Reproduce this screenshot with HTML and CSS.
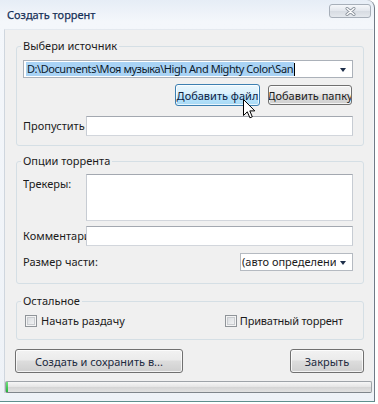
FILE: index.html
```html
<!DOCTYPE html>
<html lang="ru">
<head>
    <meta charset="UTF-8">
    <title>Создать торрент</title>
    <link rel="stylesheet" href="styles.css">
</head>
<body>
    <div class="window">
        <div class="titlebar">
            <span class="title">Создать торрент</span>
            <span class="close">
                <svg width="11" height="9" viewBox="0 0 11 9">
                    <path d="M2 1.5 L9 7.5 M9 1.5 L2 7.5" stroke="#8a929c" stroke-width="3" stroke-linecap="round"/>
                    <path d="M2 1.5 L9 7.5 M9 1.5 L2 7.5" stroke="#fff" stroke-width="1.4" stroke-linecap="round"/>
                </svg>
            </span>
        </div>

        <div class="client">
            <div class="client-body">
                <fieldset class="group group-source">
                    <legend>Выбери источник</legend>
                    <div class="combo combo-path">
                        <span class="combo-text"><span class="sel">D:\Documents\Моя музыка\High And Mighty Color\San</span><span class="caret"></span></span>
                        <span class="arrow"></span>
                    </div>
                    <div class="add-row">
                        <button class="btn btn-hover btn-file"><span>Добавить файл</span></button>
                        <button class="btn btn-folder"><span>Добавить папку</span></button>
                    </div>
                    <div class="field-row skip-row">
                        <span class="lbl">Пропустить</span>
                        <div class="edit"></div>
                    </div>
                </fieldset>

                <fieldset class="group group-options">
                    <legend>Опции торрента</legend>
                    <div class="field-row trackers-row">
                        <span class="lbl">Трекеры:</span>
                        <div class="edit memo"></div>
                    </div>
                    <div class="field-row comment-row">
                        <span class="lbl">Комментарий</span>
                        <div class="edit"></div>
                    </div>
                    <div class="field-row size-row">
                        <span class="lbl lbl-wide">Размер части:</span>
                        <div class="combo combo-size">
                            <span class="combo-text">(авто определение)</span>
                            <span class="arrow"></span>
                        </div>
                    </div>
                </fieldset>

                <fieldset class="group group-other">
                    <legend>Остальное</legend>
                    <div class="check-row">
                        <label class="check"><span class="box"></span>Начать раздачу</label>
                        <label class="check check-private"><span class="box"></span>Приватный торрент</label>
                    </div>
                </fieldset>

                <div class="action-row">
                    <button class="btn btn-create"><span>Создать и сохранить в...</span></button>
                    <button class="btn btn-close"><span>Закрыть</span></button>
                </div>
            </div>

            <div class="progress"><div class="progress-fill" style="width: 2px"></div></div>
        </div>

        <svg class="cursor" width="13" height="20" viewBox="0 0 13 20">
            <path d="M0.5 0.5 L0.5 16.5 L4.3 12.8 L6.9 18.8 L9.3 17.8 L6.8 11.9 L11.8 11.9 Z" fill="#fff" stroke="#000" stroke-width="1" stroke-linejoin="miter"/>
        </svg>
    </div>
</body>
</html>
```

FILE: styles.css
```css
* {
    box-sizing: border-box;
}
body {
    margin: 0;
    background: #fff;
    font-family: "Noto Sans", "DejaVu Sans", sans-serif;
    font-size: 11px;
    color: #1b1b1b;
}
.window {
    position: relative;
    width: 375px;
    height: 402px;
    background: linear-gradient(to bottom, #e6edf6 0, #f4f7fb 22px, #eef2f7 100%);
    border-right: 1px solid #707a86;
    border-bottom: 1px solid #5f8f8e;
    border-top-right-radius: 8px;
    display: flex;
    flex-direction: column;
}
.titlebar {
    height: 29px;
    display: flex;
    align-items: flex-start;
    justify-content: space-between;
    padding: 0 3px 0 7px;
    flex: none;
}
.title {
    margin-top: 8px;
    line-height: 14px;
    color: #17325a;
    -webkit-text-stroke: 0.25px #17325a;
    text-shadow: 0 0 4px #fff;
}
.close {
    margin-top: 4px;
    width: 42px;
    height: 14px;
    border: 1px solid #a7afb9;
    border-radius: 3px;
    background: linear-gradient(#f5f7fa, #e2e6ec 50%, #d6dbe2 51%, #e4e8ed);
    display: flex;
    align-items: center;
    justify-content: center;
}
.client {
    margin: 0 1px 0 4px;
    background: #f0f0f0;
    border-left: 1px solid #cfd6de;
    border-top: 1px solid #e4e9ef;
}
.client-body {
    padding: 9px 9px 0 11px;
}
.group {
    margin: 0;
    border: 1px solid #d5dfe5;
    border-radius: 3px;
    padding: 0 10px 9px 6px;
    min-width: 0;
}
.group legend {
    padding: 0 2px;
    margin-left: -2px;
    line-height: 14px;
}
.group-options {
    margin-top: 8px;
    padding-bottom: 12px;
}
.group-other {
    margin-top: 10px;
    padding-bottom: 11px;
}

/* combo boxes */
.combo {
    height: 18px;
    border: 1px solid #abb1b9;
    background: #fff;
    display: flex;
    align-items: center;
    padding: 0 0 0 2px;
    overflow: hidden;
}
.combo-path {
    margin-top: 7px;
}
.combo-text {
    flex: 1;
    min-width: 0;
    white-space: nowrap;
    overflow: hidden;
    display: flex;
    align-items: center;
    line-height: 14px;
}
.sel {
    background: #a9d3f5;
    color: #0c1a2c;
    padding: 0 1px;
    letter-spacing: -0.45px;
}
.caret {
    width: 1px;
    height: 13px;
    background: #000;
}
.arrow {
    flex: none;
    width: 0;
    height: 0;
    margin: 1px 6px 0 4px;
    border-left: 3.5px solid transparent;
    border-right: 3.5px solid transparent;
    border-top: 4px solid #1e2f4a;
}
.combo-size {
    width: 113px;
    margin-left: auto;
    padding-left: 1px;
    border-color: #b5bac1;
}

/* buttons */
.btn {
    font: inherit;
    color: #1b1b1b;
    height: 21px;
    padding: 0;
    border: 1px solid #707070;
    border-radius: 3px;
    background: linear-gradient(#f2f2f2 0%, #ebebeb 45%, #dddddd 50%, #cfcfcf 100%);
    box-shadow: inset 0 0 0 1px rgba(255, 255, 255, 0.75);
    display: flex;
    align-items: center;
    justify-content: center;
    overflow: hidden;
    white-space: nowrap;
}
.btn-hover {
    border-color: #3c7fb1;
    background: linear-gradient(#eaf6fd 0%, #d9f0fc 45%, #bee6fd 50%, #a7d9f5 100%);
}
.add-row {
    display: flex;
    justify-content: flex-end;
    align-items: center;
    gap: 8px;
    margin-top: 6px;
    padding-right: 1px;
    height: 22px;
}
.btn-file {
    width: 85px;
    height: 22px;
    color: #0e2140;
}
.btn-folder {
    width: 84px;
    height: 20px;
}

/* labelled fields */
.field-row {
    display: flex;
    align-items: center;
}
.lbl {
    width: 63px;
    flex: none;
    white-space: nowrap;
    overflow: hidden;
    line-height: 14px;
}
.lbl-wide {
    width: auto;
}
.edit {
    flex: 1;
    height: 20px;
    border: 1px solid #abadb3;
    border-color: #a3a8b0 #c7ccd3 #d2d6dc #c7ccd3;
    background: #fff;
}
.skip-row {
    margin-top: 10px;
}
.trackers-row {
    margin-top: 6px;
    align-items: flex-start;
}
.trackers-row .lbl {
    padding-top: 3px;
}
.memo {
    height: 47px;
}
.comment-row {
    margin-top: 5px;
}
.size-row {
    margin-top: 7px;
}

/* check boxes */
.check-row {
    display: flex;
    justify-content: space-between;
    align-items: center;
    margin-top: 6px;
    height: 14px;
    padding: 0 10px 0 2px;
}
.check {
    display: flex;
    align-items: center;
    gap: 4px;
    line-height: 14px;
}
.check-private {
    gap: 3px;
    letter-spacing: -0.2px;
}
.box {
    width: 12px;
    height: 12px;
    border: 1px solid #8f9499;
    background: linear-gradient(135deg, #d4d7db, #f7f8f9);
    box-shadow: inset 0 0 0 1px #f4f4f4, inset 0 0 0 2px #c9ccd0;
}

/* bottom */
.action-row {
    display: flex;
    justify-content: space-between;
    margin: 9px 0 0 -1px;
}
.btn-create {
    width: 168px;
    height: 24px;
    color: #1c2a3e;
}
.btn-close {
    width: 74px;
    height: 24px;
    color: #1c2a3e;
}
.progress {
    margin: 8px 1px 0 0;
    height: 12px;
    border: 1px solid #9ea3a8;
    border-bottom-color: #7f858b;
    border-radius: 2px;
    background: linear-gradient(#f6f6f6 0%, #e6e6e6 45%, #d4d4d4 50%, #e2e2e2 100%);
    display: flex;
}
.progress-fill {
    background: linear-gradient(#6fe07c, #24b53a);
}
.cursor {
    position: absolute;
    left: 243px;
    top: 99px;
}
```
